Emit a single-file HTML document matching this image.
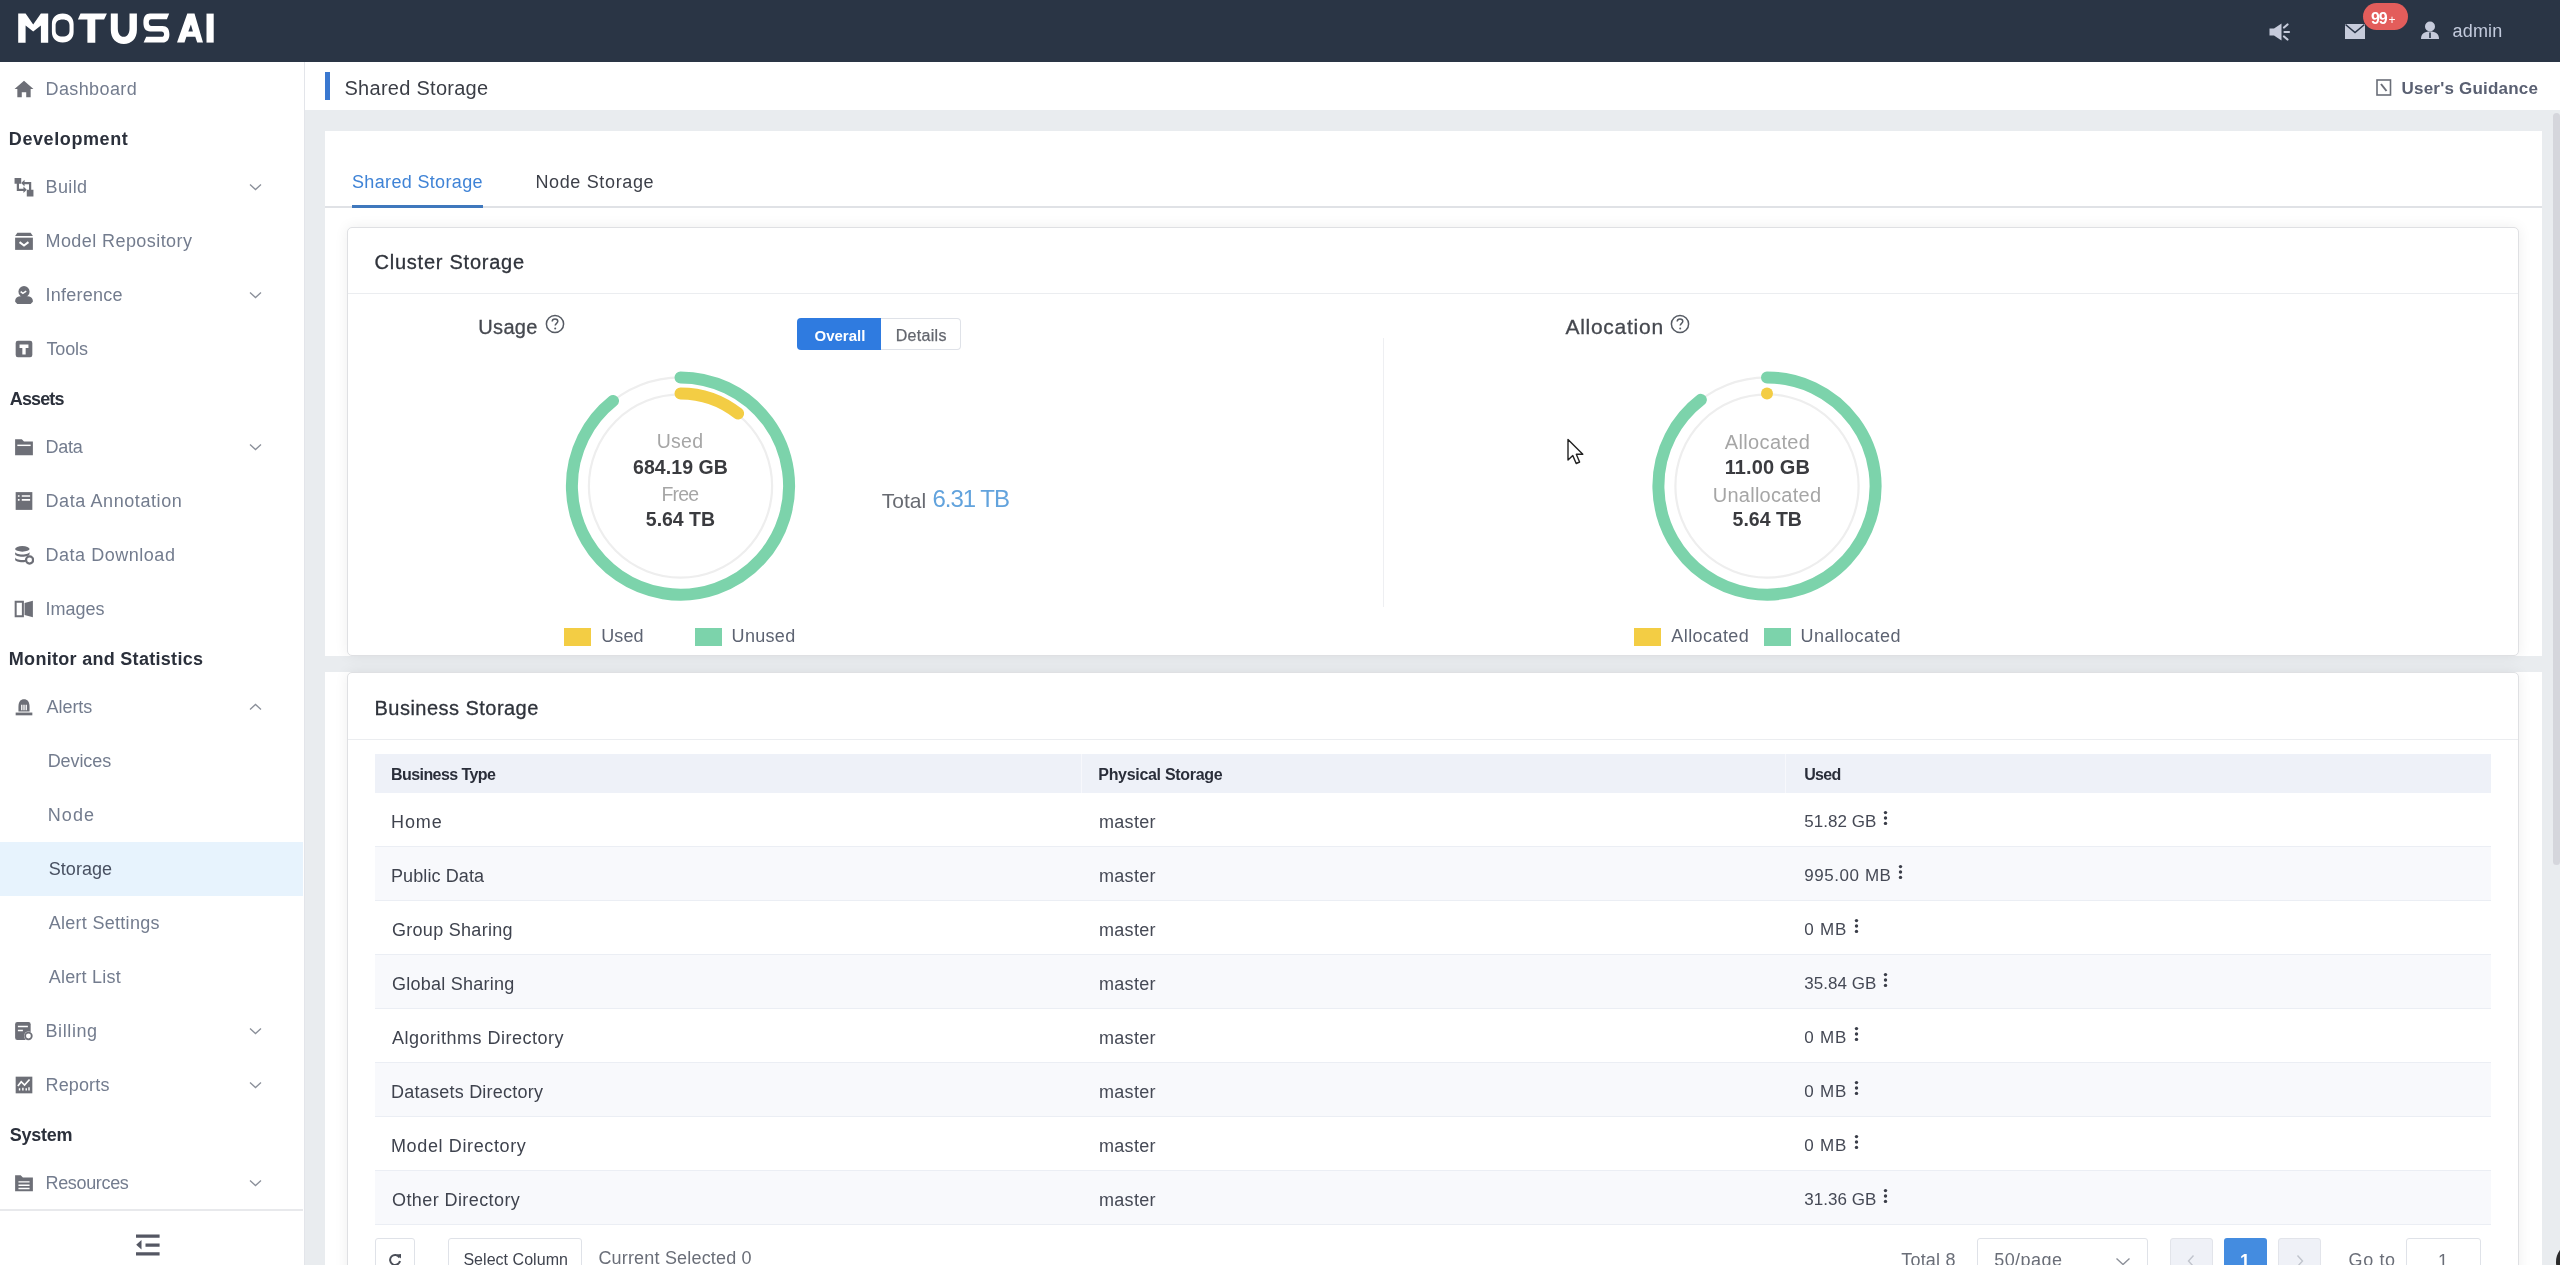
<!DOCTYPE html>
<html><head><meta charset="utf-8">
<style>
*{margin:0;padding:0;box-sizing:border-box}
html,body{width:2560px;height:1265px;overflow:hidden;background:#e9ecef;font-family:"Liberation Sans",sans-serif}
body{filter:blur(0.4px)}
.a{position:absolute}
.t{position:absolute;white-space:nowrap;line-height:1}
#hdr{left:0;top:0;width:2560px;height:62px;background:#2a3545}
#side{left:0;top:62px;width:305px;height:1203px;background:#fff;border-right:1px solid #e3e5ea}
.mi{color:#6f7a8e;font-size:18px;letter-spacing:0.3px}
.sh{color:#2b303b;font-size:17px;font-weight:bold;letter-spacing:0.7px}
.ic{position:absolute;left:14px;width:20px;height:20px}
.chev{position:absolute;left:249px;width:13px;height:8px}
</style></head><body>
<!-- HEADER -->
<div id="hdr" class="a">
<svg class="a" style="left:0;top:0" width="230" height="62" viewBox="0 0 230 62">
<g fill="#fff">
<path d="M18.2 13.6H25.6L33.2 24.6L40.9 13.6H48.2V42.8H40.9V25.6L33.2 31.4L25.6 25.6V42.8H18.2Z"/>
<path fill-rule="evenodd" d="M62.7 13.6C69.6 13.6 73.6 17.8 73.6 24V32C73.6 38.2 69.6 42.4 62.7 42.4C55.8 42.4 51.9 38.2 51.9 32V24C51.9 17.8 55.8 13.6 62.7 13.6ZM62.6 19.6C58.2 19.6 55.6 21.6 55.6 25.6V30.6C55.6 34.6 58.2 36.6 62.6 36.6C67 36.6 69.5 34.6 69.5 30.6V25.6C69.5 21.6 67 19.6 62.6 19.6Z"/>
<path d="M80.5 13.6H106.9L104.1 19.4H95.3V42.8H87.4V19.4H77.9Z"/>
<path d="M110.8 13.6H117.8V28.5C117.8 33.5 120 36.8 123.7 36.8C127.4 36.8 129.5 33.5 129.5 28.5V13.6H136.9V30C136.9 38.5 131.5 43.9 123.8 43.9C116.2 43.9 110.8 38.5 110.8 30Z"/>
<path d="M150 13.6H169.2L166.9 19.2H151.5C149.8 19.2 148.8 20.3 148.8 22.6C148.8 24.9 149.8 26 151.5 26H162.5C167 26 169.4 28.9 169.4 34.3C169.4 39.7 167 42.6 162.5 42.6H143.6L146.2 36.8H161.4C163.1 36.8 164.1 35.9 164.1 34.2C164.1 32.5 163.1 31.4 161.4 31.4H150.2C145.7 31.4 143.4 28.4 143.4 22.5C143.4 16.6 145.7 13.6 150 13.6Z"/>
<path d="M177 42.6L187.3 13.6H194.5L203 42.6H197.2L195.3 36.8H186.4L184.5 42.6Z"/>
<path d="M206.5 13.6H213.7V42.6H206.5Z"/>
</g>
<path d="M188.3 31.4L190.9 24.4L192.9 31.4Z" fill="#293547"/>
</svg>
<!-- speaker -->
<svg class="a" style="left:2268px;top:22px" width="24" height="20" viewBox="0 0 24 20">
<path d="M1.5 6.5H6L13.5 1.5V18.5L6 13.5H1.5Z" fill="#c6cbdb"/>
<path d="M16 5.5L19.5 2.5M16.5 10H21M16 14.5L19.5 17.5" stroke="#c6cbdb" stroke-width="2.2" stroke-linecap="round"/>
</svg>
<!-- mail -->
<svg class="a" style="left:2344px;top:23px" width="22" height="17" viewBox="0 0 22 17">
<path d="M1 1H21V16H1Z" fill="#c6cbdb"/>
<path d="M1.5 1.5L11 9.5L20.5 1.5" stroke="#293547" stroke-width="1.6" fill="none"/>
</svg>
<div class="a" style="left:2362.5px;top:3px;width:45px;height:27px;border-radius:14px;background:#e35d5b"></div>
<div class="t" style="left:2371px;top:10.5px;font-size:16px;font-weight:bold;color:#fff;letter-spacing:-1.2px">99<span style="font-size:12px;font-weight:normal;margin-left:2px">+</span></div>
<!-- user -->
<svg class="a" style="left:2420px;top:21px" width="20" height="19" viewBox="0 0 20 19">
<circle cx="10" cy="5.5" r="5" fill="#c6cbdb"/>
<path d="M1 18C1 12.5 4.5 10.5 10 10.5C15.5 10.5 19 12.5 19 18Z" fill="#c6cbdb"/>
<path d="M10 11.5V17" stroke="#293547" stroke-width="1.6"/>
</svg>
<div class="t" style="left:2452.5px;top:21.8px;font-size:18px;color:#c3cbdd;letter-spacing:0.2px">admin</div>
</div>
<!-- SIDEBAR -->
<div id="side" class="a"></div>
<svg class="ic" style="top:79px" viewBox="0 0 18 18"><path d="M9 1.5L17.5 9H15V16.5H11V12H7V16.5H3V9H0.5Z" fill="#6d6f77"/></svg>
<div class="t" style="left:45.50px;top:79.96px;font-size:18px;color:#737c8e;letter-spacing:0.394px;">Dashboard</div>
<div class="t" style="left:8.80px;top:129.66px;font-size:18px;color:#2b303b;font-weight:700;letter-spacing:0.597px;">Development</div>
<svg class="ic" style="top:177px" viewBox="0 0 18 18"><path d="M0.5 1H6.5V6H4.5V10.5H8.5V8.5L11.5 11.5L8.5 14.5V12.5H2.5V6H0.5Z" fill="#6d6f77"/><path d="M9.5 4.5V2.5L6.5 5.5L9.5 8.5V6.5H13.5V11.5H11.5V17.5H17.5V11.5H15.5V4.5Z" fill="#6d6f77"/></svg>
<div class="t" style="left:45.50px;top:177.96px;font-size:18px;color:#737c8e;letter-spacing:0.371px;">Build</div>
<svg class="chev" style="top:183px" viewBox="0 0 13 8"><path d="M1 1.5L6.5 6.5L12 1.5" stroke="#8a8f99" stroke-width="1.3" fill="none"/></svg>
<svg class="ic" style="top:231px" viewBox="0 0 18 18"><path d="M3 1.5H15L17 4.5H1Z" fill="#6d6f77"/><path d="M1 6H17V17H1Z" fill="#6d6f77"/><path d="M5 10L9 13L13 10" stroke="#fff" stroke-width="1.8" fill="none"/></svg>
<div class="t" style="left:45.50px;top:231.96px;font-size:18px;color:#737c8e;letter-spacing:0.423px;">Model Repository</div>
<svg class="ic" style="top:285px" viewBox="0 0 18 18"><circle cx="9" cy="6" r="5" fill="#6d6f77"/><path d="M1 15C1 11 4 10 9 10C14 10 17 11 17 15L15 17H3Z" fill="#6d6f77"/><path d="M6 6L8 7.5L11 5.5" stroke="#fff" stroke-width="1.4" fill="none"/></svg>
<div class="t" style="left:45.50px;top:285.96px;font-size:18px;color:#737c8e;letter-spacing:0.233px;">Inference</div>
<svg class="chev" style="top:291px" viewBox="0 0 13 8"><path d="M1 1.5L6.5 6.5L12 1.5" stroke="#8a8f99" stroke-width="1.3" fill="none"/></svg>
<svg class="ic" style="top:339px" viewBox="0 0 18 18"><rect x="1.5" y="1.5" width="15" height="15" rx="2" fill="#6d6f77"/><path d="M5 5H13V8H10.5V14H7.5V8H5Z" fill="#fff"/></svg>
<div class="t" style="left:46.50px;top:339.96px;font-size:18px;color:#737c8e;letter-spacing:-0.155px;">Tools</div>
<div class="t" style="left:9.80px;top:389.66px;font-size:18px;color:#2b303b;font-weight:700;letter-spacing:-0.865px;">Assets</div>
<svg class="ic" style="top:437px" viewBox="0 0 18 18"><path d="M1 2H7L9 4H17V16.5H1Z" fill="#6d6f77"/><path d="M3 7.5H15" stroke="#fff" stroke-width="1.3"/></svg>
<div class="t" style="left:45.50px;top:437.96px;font-size:18px;color:#737c8e;letter-spacing:-0.237px;">Data</div>
<svg class="chev" style="top:443px" viewBox="0 0 13 8"><path d="M1 1.5L6.5 6.5L12 1.5" stroke="#8a8f99" stroke-width="1.3" fill="none"/></svg>
<svg class="ic" style="top:491px" viewBox="0 0 18 18"><rect x="1.5" y="1" width="15" height="16" fill="#6d6f77"/><path d="M3.5 4.5H5M7 4.5H14.5M3.5 8H5M7 8H14.5" stroke="#fff" stroke-width="1.4"/></svg>
<div class="t" style="left:45.50px;top:491.96px;font-size:18px;color:#737c8e;letter-spacing:0.587px;">Data Annotation</div>
<svg class="ic" style="top:545px" viewBox="0 0 18 18"><ellipse cx="7.5" cy="3.5" rx="6.5" ry="2.5" fill="#6d6f77"/><path d="M1 6C1 7.5 4 8.5 7.5 8.5C11 8.5 14 7.5 14 6V8C14 9.5 11 10.5 7.5 10.5C4 10.5 1 9.5 1 8Z" fill="#6d6f77"/><path d="M1 11C1 12.5 4 13.5 7.5 13.5C9 13.5 10 13.3 10.5 13V15C9.5 15.5 8.5 15.5 7.5 15.5C4 15.5 1 14.5 1 13Z" fill="#6d6f77"/><circle cx="14" cy="13.5" r="3.2" fill="none" stroke="#6d6f77" stroke-width="2"/></svg>
<div class="t" style="left:45.50px;top:545.96px;font-size:18px;color:#737c8e;letter-spacing:0.528px;">Data Download</div>
<svg class="ic" style="top:599px" viewBox="0 0 18 18"><path d="M1.5 2.5H8V15.5H1.5Z" fill="none" stroke="#6d6f77" stroke-width="1.8"/><path d="M9.5 3.5L17 1.5V16.5L9.5 14.5Z" fill="#6d6f77"/></svg>
<div class="t" style="left:45.50px;top:599.96px;font-size:18px;color:#737c8e;letter-spacing:-0.025px;">Images</div>
<div class="t" style="left:8.80px;top:649.66px;font-size:18px;color:#2b303b;font-weight:700;letter-spacing:0.295px;">Monitor and Statistics</div>
<svg class="ic" style="top:697px" viewBox="0 0 18 18"><path d="M4 9C4 4 6 2 9 2C12 2 14 4 14 9V13H4Z" fill="#6d6f77"/><path d="M1.5 14H16.5V16.5H1.5Z" fill="#6d6f77"/><path d="M7 7V12M9 7V12M11 7V12" stroke="#fff" stroke-width="1.2"/></svg>
<div class="t" style="left:46.50px;top:697.96px;font-size:18px;color:#737c8e;letter-spacing:-0.042px;">Alerts</div>
<svg class="chev" style="top:703px" viewBox="0 0 13 8"><path d="M1 6.5L6.5 1.5L12 6.5" stroke="#8a8f99" stroke-width="1.3" fill="none"/></svg>
<div class="t" style="left:47.70px;top:751.56px;font-size:18px;color:#737c8e;letter-spacing:-0.087px;">Devices</div>
<div class="t" style="left:47.70px;top:805.56px;font-size:18px;color:#737c8e;letter-spacing:1.093px;">Node</div>
<div class="a" style="left:0px;top:842px;width:303px;height:53.5px;background:#e7f3fd"></div>
<div class="t" style="left:48.70px;top:859.56px;font-size:18px;color:#485061;letter-spacing:0.061px;">Storage</div>
<div class="t" style="left:48.70px;top:913.56px;font-size:18px;color:#737c8e;letter-spacing:0.288px;">Alert Settings</div>
<div class="t" style="left:48.70px;top:967.56px;font-size:18px;color:#737c8e;letter-spacing:0.220px;">Alert List</div>
<svg class="ic" style="top:1021px" viewBox="0 0 18 18"><rect x="1" y="1" width="14" height="16" rx="2" fill="#6d6f77"/><path d="M3.5 5H12.5M3.5 8.5H8" stroke="#fff" stroke-width="1.4"/><circle cx="13" cy="13.5" r="4" fill="#fff"/><circle cx="13" cy="13.5" r="3" fill="none" stroke="#6d6f77" stroke-width="1.6"/></svg>
<div class="t" style="left:45.50px;top:1021.96px;font-size:18px;color:#737c8e;letter-spacing:0.598px;">Billing</div>
<svg class="chev" style="top:1027px" viewBox="0 0 13 8"><path d="M1 1.5L6.5 6.5L12 1.5" stroke="#8a8f99" stroke-width="1.3" fill="none"/></svg>
<svg class="ic" style="top:1075px" viewBox="0 0 18 18"><rect x="1.5" y="1.5" width="15" height="15" fill="#6d6f77"/><path d="M3.5 10L6.5 6L9.5 9L14 4" stroke="#fff" stroke-width="1.5" fill="none"/><path d="M5 14V12M8 14V11.5M11 14V12M13.5 14V11" stroke="#fff" stroke-width="1.3"/></svg>
<div class="t" style="left:45.50px;top:1075.96px;font-size:18px;color:#737c8e;letter-spacing:0.146px;">Reports</div>
<svg class="chev" style="top:1081px" viewBox="0 0 13 8"><path d="M1 1.5L6.5 6.5L12 1.5" stroke="#8a8f99" stroke-width="1.3" fill="none"/></svg>
<div class="t" style="left:9.80px;top:1125.66px;font-size:18px;color:#2b303b;font-weight:700;letter-spacing:-0.286px;">System</div>
<svg class="ic" style="top:1173px" viewBox="0 0 18 18"><path d="M1 2H6L8 4H17V16.5H1Z" fill="#6d6f77"/><path d="M4 8H14M4 11H14M4 14H14" stroke="#fff" stroke-width="1.3"/></svg>
<div class="t" style="left:45.50px;top:1173.96px;font-size:18px;color:#737c8e;letter-spacing:-0.342px;">Resources</div>
<svg class="chev" style="top:1179px" viewBox="0 0 13 8"><path d="M1 1.5L6.5 6.5L12 1.5" stroke="#8a8f99" stroke-width="1.3" fill="none"/></svg>
<div class="a" style="left:0px;top:1209px;width:303px;height:1.5px;background:#e8e9ec"></div>
<svg class="a" style="left:130px;top:1228px" width="36" height="34" viewBox="130 1228 36 34"><path d="M136 1236.1H159.6M145.5 1245.2H159.6M136 1253.9H159.6" stroke="#545763" stroke-width="3.3"/><path d="M141.5 1240L136.2 1244.7L141.5 1249.4Z" fill="#545763"/></svg>
<!-- MAIN -->
<div class="a" style="left:305px;top:62px;width:2255px;height:48px;background:#fff"></div>
<div class="a" style="left:325px;top:72px;width:5.3px;height:28px;background:#3a78d0"></div>
<div class="t" style="left:344.50px;top:78.07px;font-size:20px;color:#3b3e46;letter-spacing:0.271px;">Shared Storage</div>
<svg class="a" style="left:2376px;top:79px" width="16" height="17" viewBox="0 0 16 17"><rect x="1" y="1" width="13.5" height="15" fill="none" stroke="#6a6e78" stroke-width="1.6"/><path d="M5 5L10.5 12" stroke="#6a6e78" stroke-width="2"/></svg>
<div class="t" style="left:2401.50px;top:79.81px;font-size:17px;color:#5a6072;font-weight:700;letter-spacing:0.212px;">User's Guidance</div>
<div class="a" style="left:325px;top:131px;width:2217px;height:525px;background:#fff"></div>
<div class="a" style="left:325px;top:672px;width:2217px;height:593px;background:#fff"></div>
<div class="t" style="left:352.00px;top:172.76px;font-size:18px;color:#3f83d6;letter-spacing:0.340px;">Shared Storage</div>
<div class="t" style="left:535.40px;top:172.76px;font-size:18px;color:#3c3f48;letter-spacing:0.649px;">Node Storage</div>
<div class="a" style="left:325px;top:206.2px;width:2217px;height:1.6px;background:#e0e2e6"></div>
<div class="a" style="left:352px;top:205.2px;width:131px;height:2.6px;background:#3f78bd"></div>
<div class="a" style="left:347px;top:227px;width:2172px;height:428.5px;background:#fff;border:1.3px solid #dfe0e3;border-radius:5px;box-shadow:0 0 14px rgba(0,0,0,0.07)"></div>
<div class="t" style="left:374.50px;top:252.07px;font-size:20px;color:#2f333b;letter-spacing:0.762px;-webkit-text-stroke:0.3px currentColor;">Cluster Storage</div>
<div class="a" style="left:348px;top:293px;width:2170px;height:1px;background:#ebedf0"></div>
<div class="t" style="left:478.30px;top:316.57px;font-size:20px;color:#45484f;letter-spacing:0.328px;-webkit-text-stroke:0.3px currentColor;">Usage</div>
<svg class="a" style="left:545px;top:314px" width="20" height="20" viewBox="0 0 20 20"><circle cx="10" cy="10" r="8.6" fill="none" stroke="#555a63" stroke-width="1.5"/><path d="M7.2 7.6C7.2 5.8 8.4 4.9 10 4.9C11.7 4.9 12.8 5.9 12.8 7.3C12.8 9.2 10.2 9.5 10.2 11.6" fill="none" stroke="#555a63" stroke-width="1.5"/><circle cx="10.2" cy="14.4" r="1" fill="#555a63"/></svg>
<div class="a" style="left:797px;top:318px;width:85px;height:32px;background:#2f7be0;border-radius:4px 0 0 4px"></div>
<div class="a" style="left:881px;top:318px;width:80px;height:32px;background:#fff;border:1px solid #dfe2e8;border-left:none;border-radius:0 4px 4px 0"></div>
<div class="t" style="left:814.50px;top:327.90px;font-size:15px;color:#fff;font-weight:700;">Overall</div>
<div class="t" style="left:895.70px;top:327.66px;font-size:16px;color:#63666e;letter-spacing:0.316px;-webkit-text-stroke:0.25px currentColor;">Details</div>
<svg class="a" style="left:0;top:0" width="2560" height="1265" viewBox="0 0 2560 1265"><circle cx="680.5" cy="486" r="108.6" fill="none" stroke="#eeeeee" stroke-width="2.2"/><circle cx="680.5" cy="486" r="91.6" fill="none" stroke="#eeeeee" stroke-width="2.2"/><path d="M680.50 377.40A108.6 108.6 0 1 1 613.04 400.89" fill="none" stroke="#7cd3ab" stroke-width="12" stroke-linecap="round"/><path d="M680.50 393.40A92.6 92.6 0 0 1 738.14 413.53" fill="none" stroke="#f3cd44" stroke-width="12" stroke-linecap="round"/><circle cx="1767" cy="486" r="108.6" fill="none" stroke="#eeeeee" stroke-width="2.2"/><circle cx="1767" cy="486" r="91.6" fill="none" stroke="#eeeeee" stroke-width="2.2"/><path d="M1767.00 377.40A108.6 108.6 0 1 1 1700.89 399.84" fill="none" stroke="#7cd3ab" stroke-width="12" stroke-linecap="round"/><circle cx="1767.00" cy="393.40" r="6" fill="#f3cd44"/></svg>
<div class="t" style="left:656.80px;top:432.49px;font-size:19.5px;color:#a6a6a6;letter-spacing:0.241px;">Used</div>
<div class="t" style="left:633.00px;top:457.89px;font-size:19.5px;color:#3a3b3f;font-weight:700;letter-spacing:0.071px;">684.19 GB</div>
<div class="t" style="left:661.60px;top:484.99px;font-size:19.5px;color:#a6a6a6;letter-spacing:-0.883px;">Free</div>
<div class="t" style="left:645.80px;top:510.29px;font-size:19.5px;color:#3a3b3f;font-weight:700;letter-spacing:-0.014px;">5.64 TB</div>
<div class="t" style="left:881.80px;top:489.82px;font-size:21px;color:#676a71;letter-spacing:-0.023px;">Total</div>
<div class="t" style="left:932.40px;top:487.28px;font-size:24px;color:#62a3dd;letter-spacing:-1.007px;">6.31 TB</div>
<div class="a" style="left:564px;top:628px;width:27px;height:18px;background:#f3cd44"></div>
<div class="t" style="left:601.30px;top:626.96px;font-size:18px;color:#5d6372;letter-spacing:0.063px;">Used</div>
<div class="a" style="left:695px;top:628px;width:27px;height:18px;background:#7cd3ab"></div>
<div class="t" style="left:731.60px;top:626.96px;font-size:18px;color:#5d6372;letter-spacing:0.314px;">Unused</div>
<div class="a" style="left:1383px;top:338px;width:1px;height:269px;background:#eeeff2"></div>
<div class="t" style="left:1565.40px;top:315.62px;font-size:21px;color:#45484f;letter-spacing:0.736px;-webkit-text-stroke:0.3px currentColor;">Allocation</div>
<svg class="a" style="left:1670px;top:314px" width="20" height="20" viewBox="0 0 20 20"><circle cx="10" cy="10" r="8.6" fill="none" stroke="#555a63" stroke-width="1.5"/><path d="M7.2 7.6C7.2 5.8 8.4 4.9 10 4.9C11.7 4.9 12.8 5.9 12.8 7.3C12.8 9.2 10.2 9.5 10.2 11.6" fill="none" stroke="#555a63" stroke-width="1.5"/><circle cx="10.2" cy="14.4" r="1" fill="#555a63"/></svg>
<div class="t" style="left:1724.75px;top:432.07px;font-size:20px;color:#a6a6a6;letter-spacing:0.368px;">Allocated</div>
<div class="t" style="left:1724.70px;top:457.47px;font-size:20px;color:#3a3b3f;font-weight:700;letter-spacing:0.106px;">11.00 GB</div>
<div class="t" style="left:1712.70px;top:484.57px;font-size:20px;color:#a6a6a6;letter-spacing:0.270px;">Unallocated</div>
<div class="t" style="left:1732.55px;top:510.29px;font-size:19.5px;color:#3a3b3f;font-weight:700;">5.64 TB</div>
<div class="a" style="left:1634px;top:628px;width:27px;height:18px;background:#f3cd44"></div>
<div class="t" style="left:1671.30px;top:626.96px;font-size:18px;color:#5d6372;letter-spacing:0.433px;">Allocated</div>
<div class="a" style="left:1764px;top:628px;width:27px;height:18px;background:#7cd3ab"></div>
<div class="t" style="left:1800.50px;top:626.96px;font-size:18px;color:#5d6372;letter-spacing:0.505px;">Unallocated</div>
<svg class="a" style="left:1565px;top:437px" width="22" height="30" viewBox="0 0 22 30"><path d="M3 2.5V23L7.8 18.6L11.2 26.5L14.6 25L11.3 17.3H17.8Z" fill="#fff" stroke="#222" stroke-width="1.4" stroke-linejoin="round"/></svg>
<div class="a" style="left:347px;top:672px;width:2172px;height:700px;background:#fff;border:1.3px solid #dfe0e3;border-radius:5px;box-shadow:0 0 14px rgba(0,0,0,0.07)"></div>
<div class="t" style="left:374.50px;top:697.87px;font-size:20px;color:#2f333b;letter-spacing:0.471px;-webkit-text-stroke:0.3px currentColor;">Business Storage</div>
<div class="a" style="left:348px;top:739px;width:2170px;height:1px;background:#ebedf0"></div>
<div class="a" style="left:375px;top:754px;width:2116px;height:39.3px;background:#eef1f8"></div>
<div class="a" style="left:1081px;top:754px;width:1px;height:39.3px;background:#f7f8fc"></div>
<div class="a" style="left:1785px;top:754px;width:1px;height:39.3px;background:#f7f8fc"></div>
<div class="t" style="left:391.00px;top:766.96px;font-size:16px;color:#2a2e3a;font-weight:700;letter-spacing:-0.570px;">Business Type</div>
<div class="t" style="left:1098.30px;top:766.96px;font-size:16px;color:#2a2e3a;font-weight:700;letter-spacing:-0.310px;">Physical Storage</div>
<div class="t" style="left:1804.20px;top:766.96px;font-size:16px;color:#2a2e3a;font-weight:700;letter-spacing:-0.684px;">Used</div>
<div class="a" style="left:375px;top:846.3px;width:2116px;height:1px;background:#ebeef4"></div>
<div class="t" style="left:391.00px;top:812.56px;font-size:18px;color:#3f434e;letter-spacing:0.932px;">Home</div>
<div class="t" style="left:1099.00px;top:812.56px;font-size:18px;color:#454955;letter-spacing:0.297px;">master</div>
<div class="t" style="left:1804.30px;top:813.41px;font-size:17px;color:#454955;letter-spacing:0.030px;">51.82 GB</div>
<svg class="a" style="left:1883.4px;top:809.8px" width="5" height="17" viewBox="0 0 5 17"><circle cx="2.5" cy="2.6" r="1.7" fill="#3a3d48"/><circle cx="2.5" cy="8" r="1.7" fill="#3a3d48"/><circle cx="2.5" cy="13.4" r="1.7" fill="#3a3d48"/></svg>
<div class="a" style="left:375px;top:847.3px;width:2116px;height:54px;background:#f8f9fc"></div>
<div class="a" style="left:375px;top:900.3px;width:2116px;height:1px;background:#ebeef4"></div>
<div class="t" style="left:391.00px;top:866.56px;font-size:18px;color:#3f434e;letter-spacing:0.096px;">Public Data</div>
<div class="t" style="left:1099.00px;top:866.56px;font-size:18px;color:#454955;letter-spacing:0.297px;">master</div>
<div class="t" style="left:1804.30px;top:867.41px;font-size:17px;color:#454955;letter-spacing:0.552px;">995.00 MB</div>
<svg class="a" style="left:1898.0px;top:863.8px" width="5" height="17" viewBox="0 0 5 17"><circle cx="2.5" cy="2.6" r="1.7" fill="#3a3d48"/><circle cx="2.5" cy="8" r="1.7" fill="#3a3d48"/><circle cx="2.5" cy="13.4" r="1.7" fill="#3a3d48"/></svg>
<div class="a" style="left:375px;top:954.3px;width:2116px;height:1px;background:#ebeef4"></div>
<div class="t" style="left:392.00px;top:920.56px;font-size:18px;color:#3f434e;letter-spacing:0.287px;">Group Sharing</div>
<div class="t" style="left:1099.00px;top:920.56px;font-size:18px;color:#454955;letter-spacing:0.297px;">master</div>
<div class="t" style="left:1804.30px;top:921.41px;font-size:17px;color:#454955;letter-spacing:0.820px;">0 MB</div>
<svg class="a" style="left:1853.5px;top:917.8px" width="5" height="17" viewBox="0 0 5 17"><circle cx="2.5" cy="2.6" r="1.7" fill="#3a3d48"/><circle cx="2.5" cy="8" r="1.7" fill="#3a3d48"/><circle cx="2.5" cy="13.4" r="1.7" fill="#3a3d48"/></svg>
<div class="a" style="left:375px;top:955.3px;width:2116px;height:54px;background:#f8f9fc"></div>
<div class="a" style="left:375px;top:1008.3px;width:2116px;height:1px;background:#ebeef4"></div>
<div class="t" style="left:392.00px;top:974.56px;font-size:18px;color:#3f434e;letter-spacing:0.241px;">Global Sharing</div>
<div class="t" style="left:1099.00px;top:974.56px;font-size:18px;color:#454955;letter-spacing:0.297px;">master</div>
<div class="t" style="left:1804.30px;top:975.41px;font-size:17px;color:#454955;letter-spacing:0.030px;">35.84 GB</div>
<svg class="a" style="left:1883.4px;top:971.8px" width="5" height="17" viewBox="0 0 5 17"><circle cx="2.5" cy="2.6" r="1.7" fill="#3a3d48"/><circle cx="2.5" cy="8" r="1.7" fill="#3a3d48"/><circle cx="2.5" cy="13.4" r="1.7" fill="#3a3d48"/></svg>
<div class="a" style="left:375px;top:1062.3px;width:2116px;height:1px;background:#ebeef4"></div>
<div class="t" style="left:392.00px;top:1028.56px;font-size:18px;color:#3f434e;letter-spacing:0.503px;">Algorithms Directory</div>
<div class="t" style="left:1099.00px;top:1028.56px;font-size:18px;color:#454955;letter-spacing:0.297px;">master</div>
<div class="t" style="left:1804.30px;top:1029.41px;font-size:17px;color:#454955;letter-spacing:0.820px;">0 MB</div>
<svg class="a" style="left:1853.5px;top:1025.8px" width="5" height="17" viewBox="0 0 5 17"><circle cx="2.5" cy="2.6" r="1.7" fill="#3a3d48"/><circle cx="2.5" cy="8" r="1.7" fill="#3a3d48"/><circle cx="2.5" cy="13.4" r="1.7" fill="#3a3d48"/></svg>
<div class="a" style="left:375px;top:1063.3px;width:2116px;height:54px;background:#f8f9fc"></div>
<div class="a" style="left:375px;top:1116.3px;width:2116px;height:1px;background:#ebeef4"></div>
<div class="t" style="left:391.00px;top:1082.56px;font-size:18px;color:#3f434e;letter-spacing:0.233px;">Datasets Directory</div>
<div class="t" style="left:1099.00px;top:1082.56px;font-size:18px;color:#454955;letter-spacing:0.297px;">master</div>
<div class="t" style="left:1804.30px;top:1083.41px;font-size:17px;color:#454955;letter-spacing:0.820px;">0 MB</div>
<svg class="a" style="left:1853.5px;top:1079.8px" width="5" height="17" viewBox="0 0 5 17"><circle cx="2.5" cy="2.6" r="1.7" fill="#3a3d48"/><circle cx="2.5" cy="8" r="1.7" fill="#3a3d48"/><circle cx="2.5" cy="13.4" r="1.7" fill="#3a3d48"/></svg>
<div class="a" style="left:375px;top:1170.3px;width:2116px;height:1px;background:#ebeef4"></div>
<div class="t" style="left:391.00px;top:1136.56px;font-size:18px;color:#3f434e;letter-spacing:0.626px;">Model Directory</div>
<div class="t" style="left:1099.00px;top:1136.56px;font-size:18px;color:#454955;letter-spacing:0.297px;">master</div>
<div class="t" style="left:1804.30px;top:1137.41px;font-size:17px;color:#454955;letter-spacing:0.820px;">0 MB</div>
<svg class="a" style="left:1853.5px;top:1133.8px" width="5" height="17" viewBox="0 0 5 17"><circle cx="2.5" cy="2.6" r="1.7" fill="#3a3d48"/><circle cx="2.5" cy="8" r="1.7" fill="#3a3d48"/><circle cx="2.5" cy="13.4" r="1.7" fill="#3a3d48"/></svg>
<div class="a" style="left:375px;top:1171.3px;width:2116px;height:54px;background:#f8f9fc"></div>
<div class="a" style="left:375px;top:1224.3px;width:2116px;height:1px;background:#ebeef4"></div>
<div class="t" style="left:392.00px;top:1190.56px;font-size:18px;color:#3f434e;letter-spacing:0.412px;">Other Directory</div>
<div class="t" style="left:1099.00px;top:1190.56px;font-size:18px;color:#454955;letter-spacing:0.297px;">master</div>
<div class="t" style="left:1804.30px;top:1191.41px;font-size:17px;color:#454955;letter-spacing:0.030px;">31.36 GB</div>
<svg class="a" style="left:1883.4px;top:1187.8px" width="5" height="17" viewBox="0 0 5 17"><circle cx="2.5" cy="2.6" r="1.7" fill="#3a3d48"/><circle cx="2.5" cy="8" r="1.7" fill="#3a3d48"/><circle cx="2.5" cy="13.4" r="1.7" fill="#3a3d48"/></svg>
<div class="a" style="left:375px;top:1238px;width:40px;height:40px;background:#fff;border:1px solid #dfe2e8;border-radius:3px"></div>
<svg class="a" style="left:387px;top:1251.5px" width="16" height="16" viewBox="0 0 16 16"><path d="M12.5 5.5A5 5 0 1 0 13 9" fill="none" stroke="#4a4e58" stroke-width="2"/><path d="M9.5 2.5L14 2V6.5Z" fill="#4a4e58"/></svg>
<div class="a" style="left:448px;top:1238px;width:134px;height:40px;background:#fff;border:1px solid #dfe2e8;border-radius:3px"></div>
<div class="t" style="left:463.40px;top:1251.76px;font-size:16px;color:#3f434e;letter-spacing:0.038px;">Select Column</div>
<div class="t" style="left:598.40px;top:1248.76px;font-size:18px;color:#6a6e78;letter-spacing:0.184px;">Current Selected 0</div>
<div class="t" style="left:1901.30px;top:1251.16px;font-size:18px;color:#6a6e78;letter-spacing:0.180px;">Total 8</div>
<div class="a" style="left:1977px;top:1238px;width:171px;height:40px;background:#fff;border:1px solid #dfe2e8;border-radius:3px"></div>
<div class="t" style="left:1994.20px;top:1251.16px;font-size:18px;color:#6a6e78;letter-spacing:0.458px;">50/page</div>
<svg class="a" style="left:2115px;top:1256.5px" width="16" height="9" viewBox="0 0 16 9"><path d="M1.5 1.5L8 7.5L14.5 1.5" fill="none" stroke="#8c9099" stroke-width="1.4"/></svg>
<div class="a" style="left:2170px;top:1238px;width:43px;height:40px;background:#eff1f7;border:1px solid #e2e4ea;border-radius:3px"></div>
<svg class="a" style="left:2186px;top:1254px" width="10" height="14" viewBox="0 0 10 14"><path d="M7.5 1.5L2.5 7L7.5 12.5" fill="none" stroke="#c0c4cc" stroke-width="1.4"/></svg>
<div class="a" style="left:2224px;top:1238px;width:43px;height:40px;background:#448ce0;border-radius:3px"></div>
<div class="t" style="left:2240.00px;top:1251.56px;font-size:18px;color:#fff;font-weight:700;">1</div>
<div class="a" style="left:2278px;top:1238px;width:43px;height:40px;background:#eff1f7;border:1px solid #e2e4ea;border-radius:3px"></div>
<svg class="a" style="left:2295px;top:1254px" width="10" height="14" viewBox="0 0 10 14"><path d="M2.5 1.5L7.5 7L2.5 12.5" fill="none" stroke="#c0c4cc" stroke-width="1.4"/></svg>
<div class="t" style="left:2348.60px;top:1251.16px;font-size:18px;color:#6a6e78;letter-spacing:0.597px;">Go to</div>
<div class="a" style="left:2406px;top:1238px;width:75px;height:40px;background:#fff;border:1px solid #dfe2e8;border-radius:3px"></div>
<div class="t" style="left:2438.00px;top:1251.56px;font-size:18px;color:#6a6e78;">1</div>
<div class="a" style="left:2552.5px;top:113px;width:7.5px;height:752px;background:#d5d6dc;border-radius:4px"></div>
<div class="a" style="left:2556px;top:1246px;width:24px;height:32px;border-radius:50%;background:#2a2a2a"></div>
</body></html>
